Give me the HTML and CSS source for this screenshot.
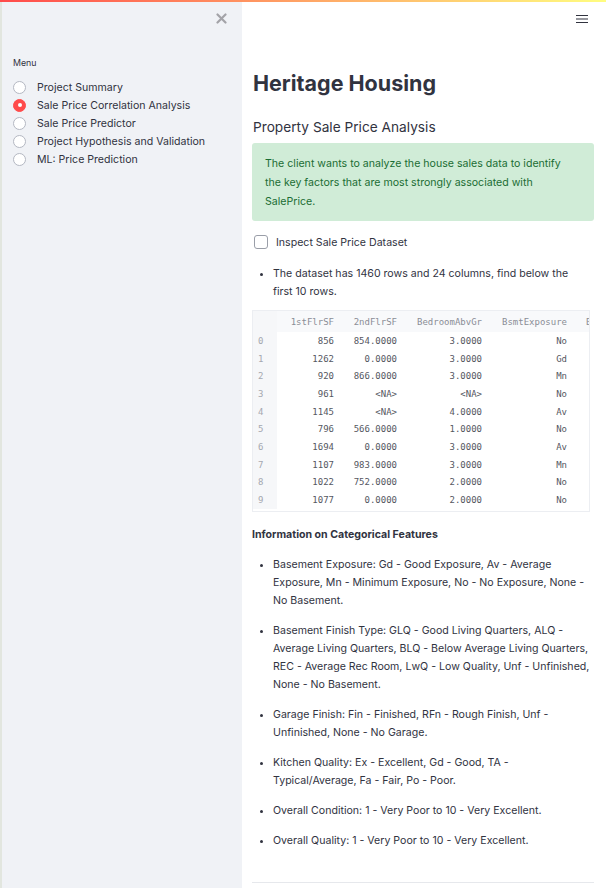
FILE: index.html
```html
<!DOCTYPE html>
<html lang="en">
<head>
<meta charset="utf-8">
<title>Heritage Housing</title>
<link rel="stylesheet" href="styles.css">
</head>
<body>
<div class="decoration"></div>
<div class="app">
  <aside class="sidebar">
    <div class="sidebar-top">
      <svg class="close" width="11" height="11" viewBox="0 0 11 11"><path d="M1.5 1.5 L9.5 9.5 M9.5 1.5 L1.5 9.5" stroke="#a3a3a8" stroke-width="2.2" stroke-linecap="round"/></svg>
    </div>
    <div class="menu-label">Menu</div>
    <ul class="radios">
      <li class="radio"><span class="dot"></span>Project Summary</li>
      <li class="radio checked"><span class="dot"></span>Sale Price Correlation Analysis</li>
      <li class="radio"><span class="dot"></span>Sale Price Predictor</li>
      <li class="radio"><span class="dot"></span>Project Hypothesis and Validation</li>
      <li class="radio"><span class="dot"></span>ML: Price Prediction</li>
    </ul>
  </aside>
  <main class="main">
    <div class="toolbar">
      <svg width="12" height="10" viewBox="0 0 12 10"><path d="M0 1.5 H12 M0 5 H12 M0 8.5 H12" stroke="#31333f" stroke-width="1.2"/></svg>
    </div>
    <h1 class="title">Heritage Housing</h1>
    <h3 class="subtitle">Property Sale Price Analysis</h3>
    <div class="alert">The client wants to analyze the house sales data to identify the key factors that are most strongly associated with SalePrice.</div>
    <label class="checkbox"><span class="box"></span>Inspect Sale Price Dataset</label>
    <ul class="bullets first">
      <li>The dataset has 1460 rows and 24 columns, find below the first 10 rows.</li>
    </ul>
    <div class="table-wrap">
      <table class="df">
        <thead>
          <tr><th class="idx"></th><th class="c1">1stFlrSF</th><th class="c2">2ndFlrSF</th><th class="c3">BedroomAbvGr</th><th class="c4">BsmtExposure</th><th class="c5">B</th></tr>
        </thead>
        <tbody>
          <tr><th class="idx">0</th><td>856</td><td>854.0000</td><td>3.0000</td><td>No</td><td></td></tr>
          <tr><th class="idx">1</th><td>1262</td><td>0.0000</td><td>3.0000</td><td>Gd</td><td></td></tr>
          <tr><th class="idx">2</th><td>920</td><td>866.0000</td><td>3.0000</td><td>Mn</td><td></td></tr>
          <tr><th class="idx">3</th><td>961</td><td>&lt;NA&gt;</td><td>&lt;NA&gt;</td><td>No</td><td></td></tr>
          <tr><th class="idx">4</th><td>1145</td><td>&lt;NA&gt;</td><td>4.0000</td><td>Av</td><td></td></tr>
          <tr><th class="idx">5</th><td>796</td><td>566.0000</td><td>1.0000</td><td>No</td><td></td></tr>
          <tr><th class="idx">6</th><td>1694</td><td>0.0000</td><td>3.0000</td><td>Av</td><td></td></tr>
          <tr><th class="idx">7</th><td>1107</td><td>983.0000</td><td>3.0000</td><td>Mn</td><td></td></tr>
          <tr><th class="idx">8</th><td>1022</td><td>752.0000</td><td>2.0000</td><td>No</td><td></td></tr>
          <tr><th class="idx">9</th><td>1077</td><td>0.0000</td><td>2.0000</td><td>No</td><td></td></tr>
        </tbody>
      </table>
    </div>
    <p class="info-title">Information on Categorical Features</p>
    <ul class="bullets cats">
      <li>Basement Exposure: Gd - Good Exposure, Av - Average Exposure, Mn - Minimum Exposure, No - No Exposure, None - No Basement.</li>
      <li>Basement Finish Type: GLQ - Good Living Quarters, ALQ - Average Living Quarters, BLQ - Below Average Living Quarters, REC - Average Rec Room, LwQ - Low Quality, Unf - Unfinished, None - No Basement.</li>
      <li>Garage Finish: Fin - Finished, RFn - Rough Finish, Unf - Unfinished, None - No Garage.</li>
      <li>Kitchen Quality: Ex - Excellent, Gd - Good, TA - Typical/Average, Fa - Fair, Po - Poor.</li>
      <li>Overall Condition: 1 - Very Poor to 10 - Very Excellent.</li>
      <li>Overall Quality: 1 - Very Poor to 10 - Very Excellent.</li>
    </ul>
    <hr class="rule">
  </main>
</div>
</body>
</html>
```
FILE: styles.css
```css
* { box-sizing: border-box; }
html, body { margin: 0; padding: 0; }
body {
  font-family: Inter, "Noto Sans", sans-serif;
  color: #31333f;
  background: #fff;
  width: 606px;
  height: 888px;
  overflow: hidden;
}
.decoration {
  position: fixed;
  top: 0; left: 0; right: 0;
  height: 2px;
  background: linear-gradient(90deg, #ff4b4b, #fffd80);
  z-index: 10;
}
.app {
  display: flex;
  height: 888px;
}
.sidebar {
  width: 242px;
  flex: none;
  background: #f0f2f6;
  border-left: 2px solid #e2e6df;
  padding: 0 0 0 11px;
}
.sidebar-top {
  display: flex;
  justify-content: flex-end;
  padding: 13px 15px 0 0;
  height: 57px;
}
.menu-label {
  font-size: 8.8px;
  color: #31333f;
  margin-bottom: 9px;
  line-height: 12px;
}
.radios {
  list-style: none;
  margin: 0;
  padding: 0;
}
.radio {
  display: flex;
  align-items: center;
  height: 18px;
  font-size: 10.6px;
  color: #31333f;
}
.dot {
  position: relative;
  width: 13px;
  height: 13px;
  border-radius: 50%;
  border: 1px solid #b4b8c2;
  background: #fff;
  margin-right: 11px;
  flex: none;
}
.radio.checked .dot {
  background: #ff4b4b;
  border-color: #ff4b4b;
}
.radio.checked .dot::after {
  content: "";
  position: absolute;
  left: 3.5px; top: 3.5px;
  width: 4px; height: 4px;
  border-radius: 50%;
  background: #fff;
}
.main {
  flex: 1;
  padding: 0 12px 0 10px;
  overflow: hidden;
}
.toolbar {
  display: flex;
  justify-content: flex-end;
  padding: 14px 6px 0 0;
  height: 68px;
}
.title {
  margin: 0;
  font-size: 21.5px;
  font-weight: 700;
  line-height: 30px;
  padding-left: 1px;
  height: 43px;
}
.subtitle {
  margin: 0;
  font-size: 13.7px;
  font-weight: 400;
  line-height: 20px;
  padding-left: 1px;
  height: 27px;
  padding-top: 6px;
}
.alert {
  margin-top: 5px;
  background: #d0ecd7;
  color: #1b6d34;
  border-radius: 3px;
  font-size: 10.6px;
  line-height: 19px;
  padding: 11px 18px 10px 13px;
}
.checkbox {
  display: flex;
  align-items: center;
  font-size: 10.6px;
  margin: 14px 0 0 2px;
  height: 14px;
}
.box {
  width: 14px;
  height: 14px;
  border: 1px solid #9a9ea8;
  border-radius: 3px;
  background: #fff;
  margin-right: 8px;
}
.bullets {
  margin: 0;
  padding: 0 1px 0 21px;
  font-size: 10.6px;
  line-height: 18px;
}
.bullets.first { margin-top: 16px; padding-right: 10px; }
.table-wrap {
  margin-top: 9px;
  width: 338px;
  height: 202px;
  overflow: hidden;
  border: 1px solid #eceef2;
}
.df {
  width: 405px;
  border-collapse: collapse;
  font-family: "DejaVu Sans Mono", "Liberation Mono", monospace;
  font-size: 9px;
  color: #55575f;
  white-space: nowrap;
  table-layout: fixed;
}
.df th, .df td {
  text-align: right;
  font-weight: 400;
  padding: 0 6px 0 0;
  height: 17.7px;
  overflow: hidden;
}
.df thead th {
  background: #f8f9fb;
  color: #8a8d96;
  height: 21px;
}
.df th.idx {
  background: #f6f7f9;
  color: #a5a8b0;
  width: 24px;
  text-align: left;
  padding-left: 5px;
}
.df .c1 { width: 63px; }
.df .c2 { width: 63px; }
.df .c3 { width: 85px; }
.df .c4 { width: 85px; }
.df .c5 { width: 85px; text-align: left; padding-left: 13px; }
.info-title {
  margin: 15px 0 0 0;
  font-size: 10.6px;
  font-weight: 700;
  line-height: 16px;
}
.bullets.cats { margin-top: 13px; }
.bullets.cats li { margin-bottom: 12px; }
.rule {
  border: 0;
  border-top: 1px solid #e6e8ec;
  margin: 32px 0 0 0;
}
```
